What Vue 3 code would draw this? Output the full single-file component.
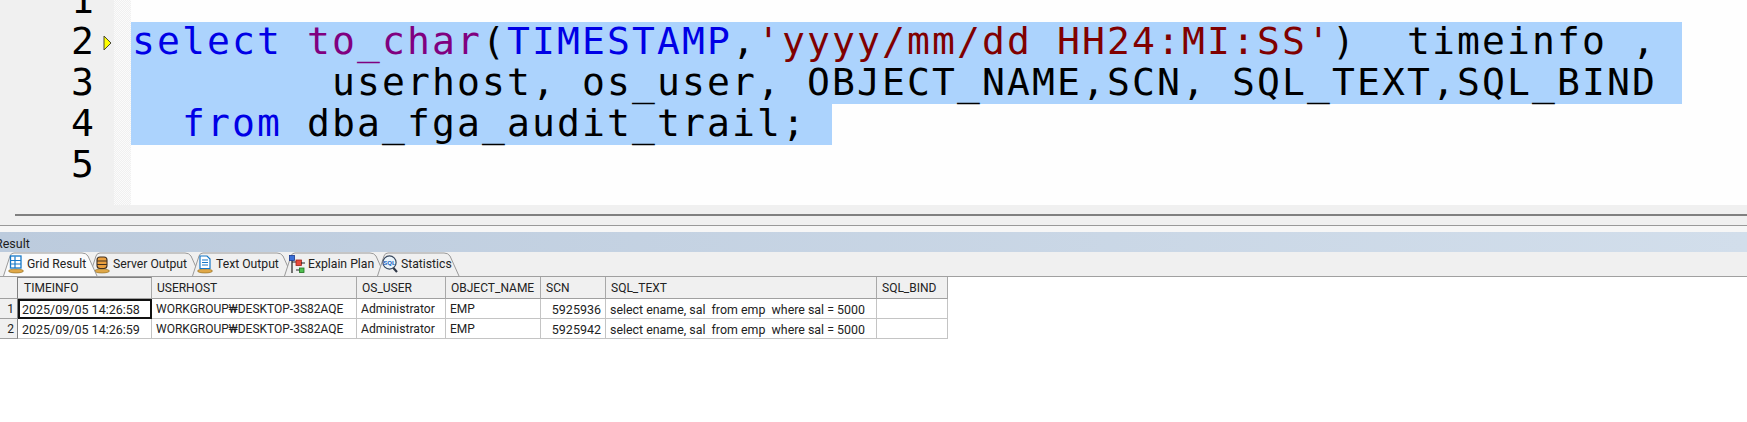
<script setup>
const numbers = [1, 2, 3, 4, 5]
const columns = [
  { name: 'TIMEINFO' }, { name: 'USERHOST' }, { name: 'OS_USER' },
  { name: 'OBJECT_NAME' }, { name: 'SCN' }, { name: 'SQL_TEXT' }, { name: 'SQL_BIND' }
]
const sqlText = 'select ename, sal\u00a0\u00a0from emp\u00a0\u00a0where sal = 5000'
const rows = [
  ['2025/09/05 14:26:58', 'WORKGROUP₩DESKTOP-3S82AQE', 'Administrator', 'EMP', '5925936', sqlText, ''],
  ['2025/09/05 14:26:59', 'WORKGROUP₩DESKTOP-3S82AQE', 'Administrator', 'EMP', '5925942', sqlText, '']
]
const tabs = [
  { label: 'Grid Result', icon: 'grid', width: 86, active: true },
  { label: 'Server Output', icon: 'server', width: 103 },
  { label: 'Text Output', icon: 'text', width: 92 },
  { label: 'Explain Plan', icon: 'plan', width: 93 },
  { label: 'Statistics', icon: 'stats', width: 74 }
]
const tabPath = (w) => `M0.5 24 L7 4 Q8 1 11 1 L${w - 7} 1 Q${w - 3} 1 ${w - 1} 4 L${w + 8} 24`
</script>

<template>
  <div class="page">
    <section class="editor">
      <div class="gutter">
        <div class="numbers">
          <div v-for="n in numbers" :key="n" class="num">{{ n }}</div>
        </div>
        <div class="dither">
          <svg class="marker" width="9" height="16" viewBox="0 0 9 16">
            <path d="M1 1 L8 8 L1 15 Z" fill="#ffff00" stroke="#4a4a30" stroke-width="1" />
          </svg>
        </div>
      </div>
      <div class="code">
        <div class="line"></div>
        <div class="line sel wide"><span class="txt"><span class="kw">select</span> <span class="fn">to_char</span>(<span class="kw">TIMESTAMP</span>,<span class="str">'yyyy/mm/dd HH24:MI:SS'</span>)&nbsp;&nbsp;timeinfo ,</span></div>
        <div class="line sel wide"><span class="txt">&nbsp;&nbsp;&nbsp;&nbsp;&nbsp;&nbsp;&nbsp;&nbsp;userhost, os_user, OBJECT_NAME,SCN, SQL_TEXT,SQL_BIND</span></div>
        <div class="line sel short"><span class="txt">&nbsp;&nbsp;<span class="kw">from</span> dba_fga_audit_trail;</span></div>
        <div class="line"></div>
      </div>
    </section>

    <section class="splitter">
      <div class="grip"></div>
      <div class="rule"></div>
    </section>

    <div class="title-bar"><span>Result</span></div>

    <nav class="tabstrip">
      <div
        v-for="tab in tabs"
        :key="tab.label"
        class="tab"
        :class="{ active: tab.active }"
        :style="{ width: tab.width + 'px' }"
      >
        <svg class="tab-shape" :width="tab.width + 10" height="25" :viewBox="`0 0 ${tab.width + 10} 25`">
          <path :d="tabPath(tab.width) + ' Z'" :fill="tab.active ? '#fbfbfb' : '#f0f0f0'" stroke="none" />
          <path :d="tabPath(tab.width)" fill="none" stroke="#9a9a9a" />
        </svg>
        <svg class="icon" width="16" height="19" viewBox="0 0 16 19">
          <template v-if="tab.icon === 'grid'">
            <ellipse cx="8" cy="16" rx="7.5" ry="2" fill="#e0a848" stroke="#8a6a20" stroke-width=".6" />
            <rect x="2.5" y="1" width="10.5" height="12" fill="#fff" stroke="#1678c8" stroke-width="1.3" />
            <path d="M2.5 5.5H13M2.5 9H13M7 1.5V13" stroke="#1678c8" stroke-width="1.2" />
          </template>
          <template v-else-if="tab.icon === 'server'">
            <ellipse cx="8" cy="16" rx="7.5" ry="2" fill="#e0a848" stroke="#8a6a20" stroke-width=".6" />
            <rect x="3" y="2" width="10" height="11.5" rx="3" fill="#eaa040" stroke="#403020" stroke-width="1.1" />
            <path d="M3 6H13M3 9.5H13" stroke="#403020" stroke-width="1" />
          </template>
          <template v-else-if="tab.icon === 'text'">
            <ellipse cx="8" cy="16" rx="7.5" ry="2" fill="#e0a848" stroke="#8a6a20" stroke-width=".6" />
            <path d="M3 1H10L13 4V13.5H3Z" fill="#fff" stroke="#1678c8" stroke-width="1.2" />
            <path d="M5 5H11M5 7.5H11M5 10H11" stroke="#1678c8" stroke-width="1.1" />
          </template>
          <template v-else-if="tab.icon === 'plan'">
            <path d="M3 5V18M3 7H8M7 15H11" stroke="#222" stroke-width="1.2" fill="none" />
            <rect x="0.5" y="0.5" width="5" height="5" fill="#3a6fd8" stroke="#1a3a90" stroke-width=".8" />
            <rect x="7" y="5" width="5.5" height="5.5" fill="#e84a3a" stroke="#a02018" stroke-width=".8" />
            <rect x="10.5" y="13" width="4.5" height="4.5" fill="#50c050" stroke="#207020" stroke-width=".8" />
            <path d="M12 8H16" stroke="#222" stroke-width="1" />
          </template>
          <template v-else>
            <path d="M10.5 12L15 17" stroke="#303848" stroke-width="2.2" />
            <circle cx="7.5" cy="7.5" r="6.6" fill="#eaf4fb" stroke="#3a4a60" stroke-width="1.2" />
            <text x="7.5" y="9.8" text-anchor="middle" class="sql-mini">SQL</text>
          </template>
        </svg>
        <span class="tab-label">{{ tab.label }}</span>
      </div>
    </nav>

    <section class="grid">
      <div class="corner"></div>
      <div
        v-for="(col, i) in columns"
        :key="col.name"
        class="head"
        :class="{ current: i === 0 }"
      >{{ col.name }}</div>
      <template v-for="(row, r) in rows" :key="r">
        <div class="rownum">{{ r + 1 }}</div>
        <div
          v-for="(value, c) in row"
          :key="c"
          class="cell"
          :class="[`col-${c}`, { right: c === 4, focus: r === 0 && c === 0 }]"
        >{{ value }}</div>
      </template>
    </section>
  </div>
</template>

<style scoped>
.page {
  width: 1747px;
  height: 422px;
  overflow: hidden;
  background: #fff;
  display: flex;
  flex-direction: column;
}

/* Editor */
.editor {
  display: flex;
  height: 205px;
  flex: none;
  overflow: hidden;
  background: #fefefe;
  font-family: "DejaVu Sans Mono", monospace;
  font-size: 38px;
  letter-spacing: 2.12px;
  line-height: 39px;
}
.gutter {
  display: flex;
  width: 131px;
  flex: none;
}
.numbers {
  width: 114px;
  background: #f0f0f0;
  margin-top: -19px;
  padding-right: 18px;
  box-sizing: border-box;
  text-align: right;
  color: #000;
}
.num {
  height: 41px;
}
.dither {
  position: relative;
  flex: 1;
  background: repeating-conic-gradient(#f0f0f0 0 25%, #fbfbfb 0 50%) 0 0 / 2px 2px;
}
.marker {
  position: absolute;
  left: -11px;
  top: 35px;
}
.code {
  flex: 1;
  margin-top: -19px;
  white-space: nowrap;
  color: #000;
}
.line {
  height: 41px;
  padding-left: 1px;
}
.txt {
  position: relative;
}
.sel {
  background: #acd3fd;
}
.wide {
  width: 1550px;
}
.short {
  width: 700px;
}
.kw {
  color: #0000e6;
}
.fn {
  color: #800080;
}
.str {
  color: #800000;
}

/* Splitter */
.splitter {
  flex: none;
  height: 27px;
  background: #f0f0f0;
  display: flex;
  flex-direction: column;
}
.grip {
  height: 2px;
  margin: 9px 0 0 15px;
  background: #808080;
}
.rule {
  margin-top: 9px;
  height: 1px;
  background: #999;
  border-bottom: 6px solid #f6f6f6;
}

.title-bar {
  flex: none;
  height: 20px;
  background: linear-gradient(90deg, #bccbdd, #d2deeb);
  overflow: hidden;
  font: 12.5px/23px Roboto, sans-serif;
  color: #1c1c1c;
}
.title-bar span {
  display: block;
  margin-left: -5px;
}

/* Tabs */
.tabstrip {
  flex: none;
  height: 25px;
  box-sizing: border-box;
  padding-left: 3px;
  display: flex;
  align-items: flex-end;
  background: #f0f0f0;
  border-bottom: 1px solid #a0a0a0;
  font: 12.2px Roboto, sans-serif;
  color: #222;
}
.tab {
  position: relative;
  height: 24px;
  display: flex;
  align-items: center;
  padding-left: 5px;
  box-sizing: border-box;
  flex: none;
}
.tab.active {
  z-index: 1;
}
.tab-shape {
  position: absolute;
  left: 0;
  top: 0;
}
.icon {
  position: relative;
  flex: none;
}
.tab-label {
  position: relative;
  margin-left: 3px;
  white-space: nowrap;
}
.sql-mini {
  font: 700 6px "Liberation Sans", sans-serif;
  fill: #1060c0;
}

/* Grid */
.grid {
  display: grid;
  grid-template-columns: 18px 134px 205px 89px 95px 65px 271px 71px;
  grid-auto-rows: 20px;
  grid-template-rows: 22px;
  width: 948px;
  font: 12px Roboto, sans-serif;
  color: #222;
}
.corner,
.head {
  box-sizing: border-box;
  background: #f0f0f0;
  border-right: 1px solid #a8a8a8;
  border-bottom: 1px solid #a0a0a0;
  white-space: nowrap;
  line-height: 23px;
}
.head {
  padding-left: 5px;
}
.head.current {
  border-top: 1px solid #808080;
  border-left: 1px solid #808080;
  margin-left: -1px;
  padding-left: 6px;
  line-height: 21px;
}
.rownum {
  box-sizing: border-box;
  background: #f0f0f0;
  border-right: 1px solid #808080;
  border-bottom: 1px solid #a0a0a0;
  text-align: right;
  padding-right: 3px;
  line-height: 21px;
}
.cell {
  box-sizing: border-box;
  border-right: 1px solid #c4c4c4;
  border-bottom: 1px solid #c4c4c4;
  padding: 0 4px;
  line-height: 21px;
  white-space: nowrap;
}
.col-0,
.col-4 {
  font-size: 12.5px;
}
.col-2 {
  font-size: 12.2px;
}
.col-5 {
  font-size: 12.4px;
}
.cell.right {
  text-align: right;
}
.cell.focus {
  outline: 2px solid #111;
  outline-offset: -2px;
}
</style>

<style>
body {
  margin: 0;
  background: #fff;
}
</style>
